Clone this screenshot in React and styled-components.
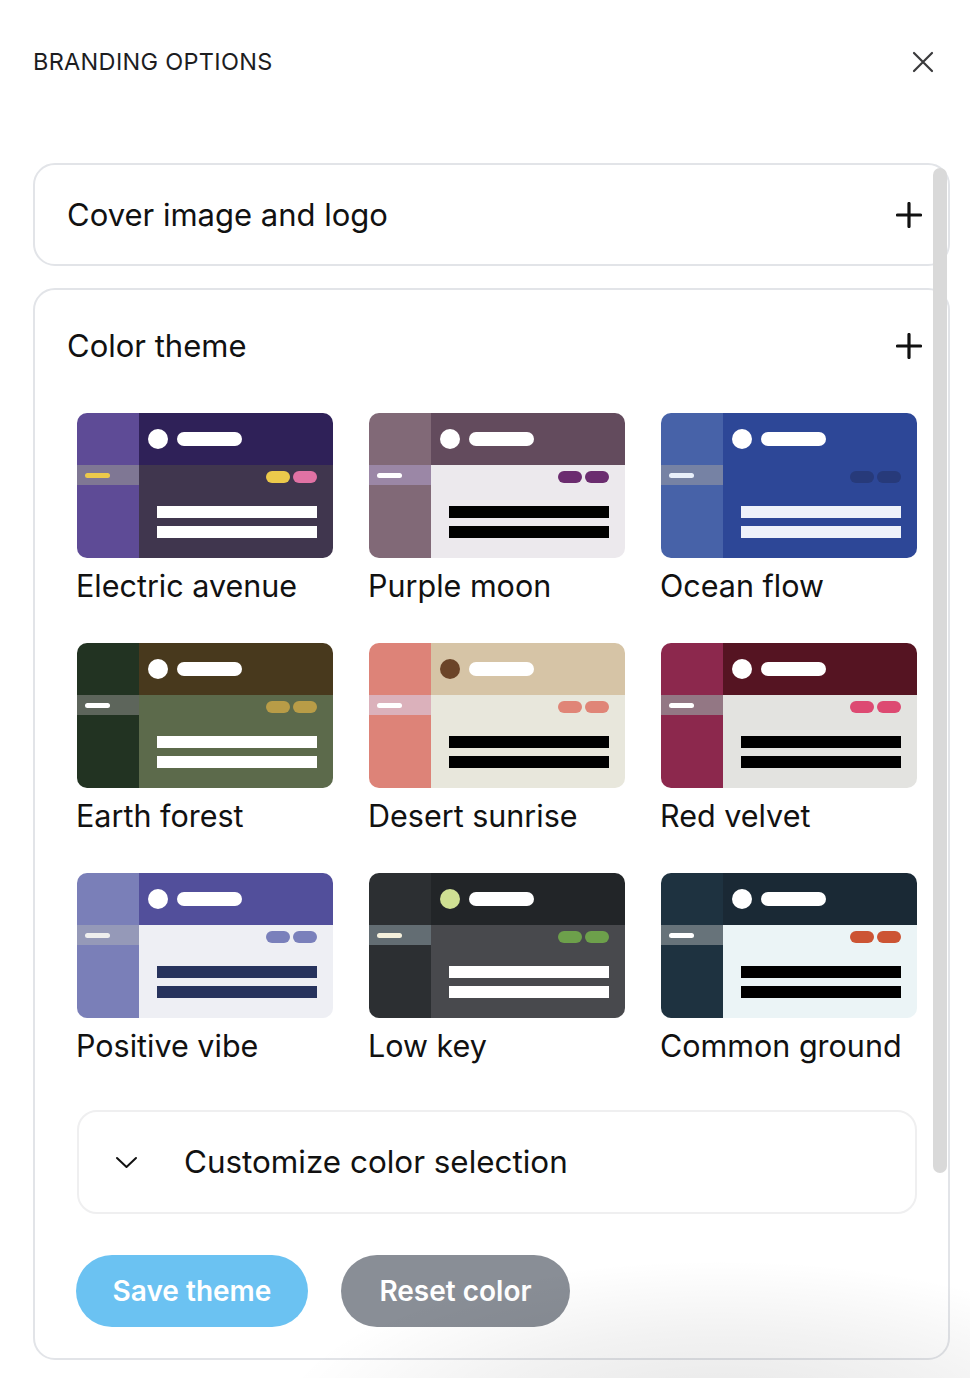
import React from "react";
import styled, { createGlobalStyle } from "styled-components";

const GlobalStyle = createGlobalStyle`
	* {
		box-sizing: border-box;
	}
	body {
		margin: 0;
		background: #ffffff;
		font-family: Inter, "Noto Sans", sans-serif;
		color: #111111;
	}
`;

const themes = [
	{
		name: "Electric avenue",
		side: "#5e4b96",
		strip: "#7f7794",
		stripBar: "#ecc94b",
		head: "#2f2158",
		dot: "#ffffff",
		body: "#40364e",
		pills: ["#ecc94b", "#e072a4"],
		bar: "#ffffff",
	},
	{
		name: "Purple moon",
		side: "#816977",
		strip: "#9b87a6",
		stripBar: "#ffffff",
		head: "#634b5d",
		dot: "#ffffff",
		body: "#ece9ed",
		pills: ["#6b2c6f", "#6b2c6f"],
		bar: "#000000",
	},
	{
		name: "Ocean flow",
		side: "#4762a8",
		strip: "#7682a4",
		stripBar: "#e8effa",
		head: "#2d4797",
		dot: "#ffffff",
		body: "#2d4797",
		pills: ["#273a7a", "#273a7a"],
		bar: "#eef2fa",
	},
	{
		name: "Earth forest",
		side: "#223322",
		strip: "#5d655b",
		stripBar: "#ffffff",
		head: "#48391d",
		dot: "#ffffff",
		body: "#5c6a4b",
		pills: ["#b89c47", "#b89c47"],
		bar: "#ffffff",
	},
	{
		name: "Desert sunrise",
		side: "#dd8378",
		strip: "#dbb1bb",
		stripBar: "#ffffff",
		head: "#d6c4a6",
		dot: "#6b4428",
		body: "#e8e7dc",
		pills: ["#e08577", "#e08577"],
		bar: "#000000",
	},
	{
		name: "Red velvet",
		side: "#8c284d",
		strip: "#937784",
		stripBar: "#ffffff",
		head: "#551422",
		dot: "#ffffff",
		body: "#e3e3e0",
		pills: ["#dd4a72", "#dd4a72"],
		bar: "#000000",
	},
	{
		name: "Positive vibe",
		side: "#7a7fb8",
		strip: "#9599b8",
		stripBar: "#eeeeee",
		head: "#524f9b",
		dot: "#ffffff",
		body: "#eeeff4",
		pills: ["#7a80bb", "#7a80bb"],
		bar: "#27335d",
	},
	{
		name: "Low key",
		side: "#2c2f32",
		strip: "#636d73",
		stripBar: "#f5f0dc",
		head: "#222528",
		dot: "#cfe093",
		body: "#48494d",
		pills: ["#6da04b", "#6da04b"],
		bar: "#ffffff",
	},
	{
		name: "Common ground",
		side: "#1e3240",
		strip: "#67737a",
		stripBar: "#ffffff",
		head: "#1a2935",
		dot: "#ffffff",
		body: "#ebf4f6",
		pills: ["#cc5434", "#cc5434"],
		bar: "#000000",
	},
];

const Page = styled.div`
	position: relative;
	width: 970px;
	height: 1378px;
	overflow: hidden;
	background: #ffffff;
`;

const Header = styled.header`
	display: flex;
	align-items: center;
	justify-content: space-between;
	padding: 48px 36px 0 33px;
	height: 76px;
`;

const HeaderTitle = styled.h1`
	margin: 0;
	font-size: 23.5px;
	font-weight: 400;
	line-height: 28px;
	letter-spacing: 0.3px;
	color: #1d1d1f;
`;

const IconButton = styled.button`
	display: flex;
	align-items: center;
	justify-content: center;
	padding: 0;
	border: none;
	background: none;
	color: ${(p) => p.$color || "#111"};
	cursor: pointer;
`;

const Panels = styled.div`
	display: flex;
	flex-direction: column;
	gap: 22px;
	margin: 87px 20px 0 33px;
`;

const Panel = styled.section`
	border: 2px solid #e2e4e8;
	border-radius: 22px;
	padding: ${(p) => (p.$open ? "37px 31px 31px 42px" : "0 31px 0 42px")};
	height: ${(p) => (p.$open ? "auto" : "103px")};
	display: flex;
	flex-direction: column;
	justify-content: center;
`;

const PanelHeader = styled.div`
	display: flex;
	align-items: center;
	justify-content: space-between;
	margin: 0 -5px 0 -10px;
	height: 38px;
`;

const PanelTitle = styled.h2`
	margin: 0;
	font-size: 31px;
	font-weight: 400;
	line-height: 38px;
	color: #111;
`;

const ThemeGrid = styled.div`
	display: grid;
	grid-template-columns: repeat(3, 256px);
	justify-content: space-between;
	row-gap: 37px;
	margin-top: 48px;
`;

const Tile = styled.div`
	display: flex;
	flex-direction: column;
	cursor: pointer;
`;

const Preview = styled.div`
	display: flex;
	width: 256px;
	height: 145px;
	border-radius: 10px;
	overflow: hidden;
`;

const Sidebar = styled.div`
	width: 62px;
	background: ${(p) => p.$bg};
`;

const SideStrip = styled.div`
	display: flex;
	align-items: center;
	margin-top: 52px;
	height: 20px;
	padding-left: 8px;
	background: ${(p) => p.$bg};
`;

const SideBar = styled.span`
	width: 25px;
	height: 5px;
	border-radius: 3px;
	background: ${(p) => p.$bg};
`;

const Main = styled.div`
	flex: 1;
	display: flex;
	flex-direction: column;
`;

const Topbar = styled.div`
	display: flex;
	align-items: center;
	gap: 9px;
	height: 52px;
	padding-left: 9px;
	background: ${(p) => p.$bg};
`;

const Avatar = styled.span`
	width: 20px;
	height: 20px;
	border-radius: 50%;
	background: ${(p) => p.$bg};
`;

const NamePill = styled.span`
	width: 65px;
	height: 14px;
	border-radius: 7px;
	background: #ffffff;
`;

const Content = styled.div`
	flex: 1;
	display: flex;
	flex-direction: column;
	align-items: flex-end;
	padding: 6px 16px 0 18px;
	background: ${(p) => p.$bg};
`;

const PillRow = styled.div`
	display: flex;
	gap: 3px;
`;

const Pill = styled.span`
	width: 24px;
	height: 12px;
	border-radius: 6px;
	background: ${(p) => p.$bg};
`;

const Bars = styled.div`
	display: flex;
	flex-direction: column;
	gap: 8px;
	width: 100%;
	margin-top: 23px;
`;

const Bar = styled.span`
	height: 12px;
	background: ${(p) => p.$bg};
`;

const TileLabel = styled.span`
	margin-top: 8px;
	margin-left: -1px;
	font-size: 30.5px;
	line-height: 40px;
	color: #111;
`;

const Customize = styled.div`
	display: flex;
	align-items: center;
	gap: 46px;
	height: 104px;
	margin-top: 44px;
	padding-left: 36px;
	border: 2px solid #efeff0;
	border-radius: 20px;
	cursor: pointer;
`;

const CustomizeText = styled.span`
	font-size: 31.4px;
	line-height: 38px;
	color: #111;
`;

const Actions = styled.div`
	display: flex;
	gap: 33px;
	margin-top: 41px;
	margin-left: -1px;
`;

const PillButton = styled.button`
	width: ${(p) => p.$width}px;
	height: 72px;
	border: none;
	border-radius: 36px;
	background: ${(p) => p.$bg};
	color: #ffffff;
	font-family: Inter, "Noto Sans", sans-serif;
	font-size: 28px;
	font-weight: 600;
	cursor: pointer;
`;

const ScrollThumb = styled.div`
	position: absolute;
	top: 168px;
	left: 933px;
	width: 14px;
	height: 1005px;
	border-radius: 7px;
	background: #d9d9d9;
`;

const CornerShade = styled.div`
	position: absolute;
	right: -200px;
	bottom: -220px;
	width: 900px;
	height: 340px;
	border-radius: 50%;
	background: radial-gradient(
		ellipse at center,
		rgba(0, 0, 0, 0.1) 0%,
		rgba(0, 0, 0, 0.05) 40%,
		rgba(0, 0, 0, 0) 70%
	);
	pointer-events: none;
`;

const CloseIcon = () => (
	<svg width="22" height="22" viewBox="0 0 22 22" fill="none">
		<path
			d="M2 2L20 20M20 2L2 20"
			stroke="currentColor"
			strokeWidth="2.2"
			strokeLinecap="round"
		/>
	</svg>
);

const PlusIcon = () => (
	<svg width="26" height="26" viewBox="0 0 26 26" fill="none">
		<path
			d="M13 1.5V24.5M1.5 13H24.5"
			stroke="currentColor"
			strokeWidth="3.2"
			strokeLinecap="round"
		/>
	</svg>
);

const ChevronIcon = () => (
	<svg width="23" height="13" viewBox="0 0 23 13" fill="none">
		<path
			d="M2 2L11.5 11L21 2"
			stroke="currentColor"
			strokeWidth="2"
			strokeLinecap="round"
			strokeLinejoin="round"
		/>
	</svg>
);

const ThemeTile = ({ theme }) => (
	<Tile>
		<Preview>
			<Sidebar $bg={theme.side}>
				<SideStrip $bg={theme.strip}>
					<SideBar $bg={theme.stripBar} />
				</SideStrip>
			</Sidebar>
			<Main>
				<Topbar $bg={theme.head}>
					<Avatar $bg={theme.dot} />
					<NamePill />
				</Topbar>
				<Content $bg={theme.body}>
					<PillRow>
						{theme.pills.map((c, i) => (
							<Pill key={i} $bg={c} />
						))}
					</PillRow>
					<Bars>
						<Bar $bg={theme.bar} />
						<Bar $bg={theme.bar} />
					</Bars>
				</Content>
			</Main>
		</Preview>
		<TileLabel>{theme.name}</TileLabel>
	</Tile>
);

export default function App() {
	return (
		<>
			<GlobalStyle />
			<Page>
				<Header>
					<HeaderTitle>BRANDING OPTIONS</HeaderTitle>
					<IconButton $color="#3a3a3c" aria-label="Close">
						<CloseIcon />
					</IconButton>
				</Header>

				<Panels>
					<Panel>
						<PanelHeader>
							<PanelTitle>Cover image and logo</PanelTitle>
							<IconButton aria-label="Expand">
								<PlusIcon />
							</IconButton>
						</PanelHeader>
					</Panel>

					<Panel $open>
						<PanelHeader>
							<PanelTitle>Color theme</PanelTitle>
							<IconButton aria-label="Expand">
								<PlusIcon />
							</IconButton>
						</PanelHeader>

						<ThemeGrid>
							{themes.map((t) => (
								<ThemeTile key={t.name} theme={t} />
							))}
						</ThemeGrid>

						<Customize>
							<ChevronIcon />
							<CustomizeText>Customize color selection</CustomizeText>
						</Customize>

						<Actions>
							<PillButton $width={232} $bg="#6bc2f2">
								Save theme
							</PillButton>
							<PillButton $width={229} $bg="#898e96">
								Reset color
							</PillButton>
						</Actions>
					</Panel>
				</Panels>

				<ScrollThumb />
				<CornerShade />
			</Page>
		</>
	);
}
